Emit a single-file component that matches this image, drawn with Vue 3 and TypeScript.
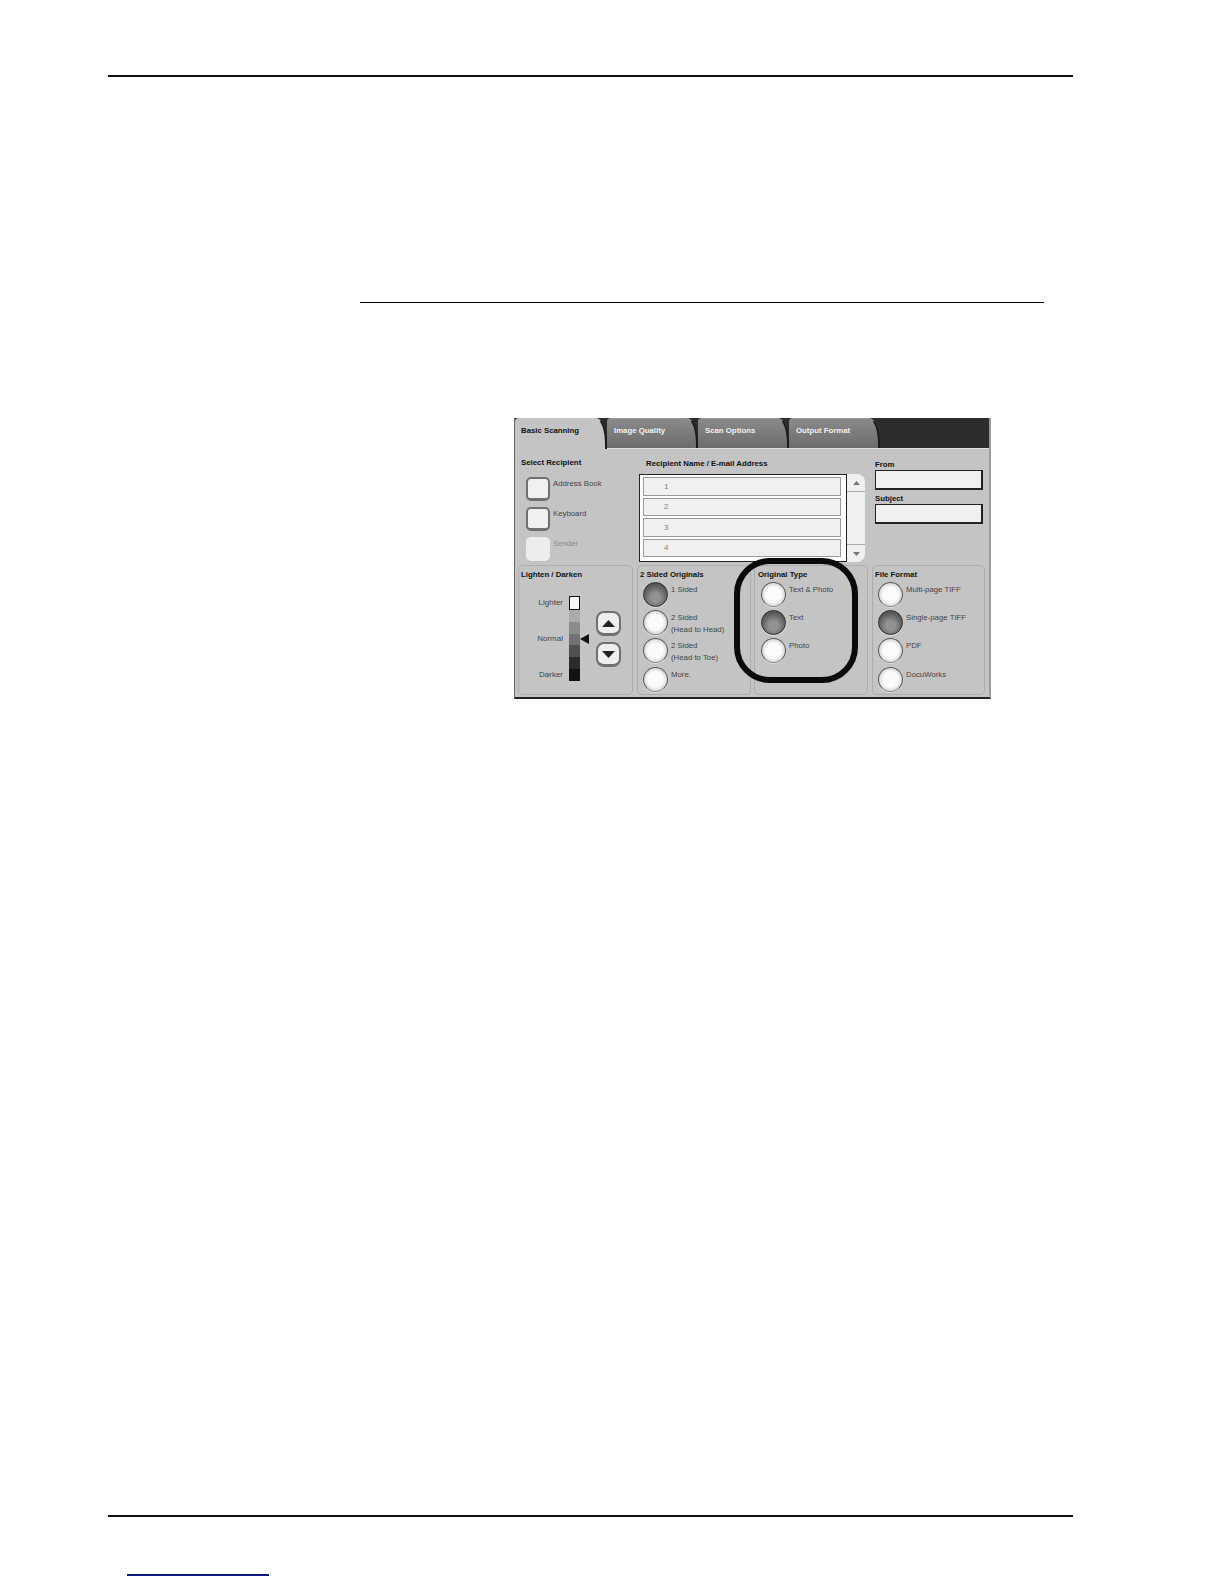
<script setup lang="ts">
const tabs = ['Image Quality', 'Scan Options', 'Output Format']
const rows = ['1', '2', '3', '4']
const scale = ['#f8f8f8', '#ababab', '#8c8c8c', '#727272', '#505050', '#2c2c2c', '#121212']
const sided = [
  { label: '1 Sided', on: true },
  { label: '2 Sided\n(Head to Head)', on: false },
  { label: '2 Sided\n(Head to Toe)', on: false },
  { label: 'More.', on: false },
]
const types = [
  { label: 'Text & Photo', on: false },
  { label: 'Text', on: true },
  { label: 'Photo', on: false },
]
const formats = [
  { label: 'Multi-page TIFF', on: false },
  { label: 'Single-page TIFF', on: true },
  { label: 'PDF', on: false },
  { label: 'DocuWorks', on: false },
]
</script>

<template>
  <main class="page">
    <div class="rule top"></div>
    <div class="rule mid"></div>
    <section class="ui">
      <div class="tabbar">
        <div class="tab active">Basic Scanning</div>
        <div v-for="t in tabs" :key="t" class="tab">{{ t }}</div>
      </div>
      <div class="body">
        <div class="upper">
          <div class="recip">
            <h4>Select Recipient</h4>
            <div class="sq"><i class="btn"></i><span>Address Book</span></div>
            <div class="sq"><i class="btn"></i><span>Keyboard</span></div>
            <div class="sq off"><i class="btn"></i><span>Sender</span></div>
          </div>
          <div class="list">
            <h4>Recipient Name / E-mail Address</h4>
            <div class="listbox">
              <div class="rows">
                <div v-for="r in rows" :key="r" class="row">{{ r }}</div>
              </div>
              <div class="scroll">
                <div class="cap"><svg width="7" height="4" viewBox="0 0 7 4"><path d="M3.5 0 7 4H0Z" fill="#777" /></svg></div>
                <div class="cap"><svg width="7" height="4" viewBox="0 0 7 4"><path d="M3.5 4 0 0H7Z" fill="#777" /></svg></div>
              </div>
            </div>
          </div>
          <div class="fields">
            <h4>From</h4>
            <div class="field"></div>
            <h4>Subject</h4>
            <div class="field"></div>
          </div>
        </div>
        <div class="lower">
          <div class="group g1">
            <h4>Lighten / Darken</h4>
            <div class="lighten">
              <div class="labels"><span>Lighter</span><span>Normal</span><span>Darker</span></div>
              <div class="scale"><b v-for="c in scale" :key="c" :style="{ background: c }"></b></div>
              <svg class="mark" width="9" height="10" viewBox="0 0 9 10"><path d="M0 5 9 0V10Z" fill="#111" /></svg>
              <div class="arrows">
                <div class="arrow"><svg width="13" height="7" viewBox="0 0 13 7"><path d="M6.5 0 13 7H0Z" fill="#222" /></svg></div>
                <div class="arrow"><svg width="13" height="7" viewBox="0 0 13 7"><path d="M6.5 7 0 0H13Z" fill="#222" /></svg></div>
              </div>
            </div>
          </div>
          <div class="group g2">
            <h4>2 Sided Originals</h4>
            <div v-for="o in sided" :key="o.label" class="opt">
              <i class="radio" :class="{ on: o.on }"></i><span>{{ o.label }}</span>
            </div>
          </div>
          <div class="group g3">
            <h4>Original Type</h4>
            <div v-for="o in types" :key="o.label" class="opt">
              <i class="radio" :class="{ on: o.on }"></i><span>{{ o.label }}</span>
            </div>
          </div>
          <div class="group g4">
            <h4>File Format</h4>
            <div v-for="o in formats" :key="o.label" class="opt">
              <i class="radio" :class="{ on: o.on }"></i><span>{{ o.label }}</span>
            </div>
          </div>
        </div>
      </div>
      <div class="ring"></div>
    </section>
    <div class="rule bottom"></div>
    <div class="link"></div>
  </main>
</template>

<style>
html, body { margin: 0; background: #fff; }
</style>

<style scoped>
.page { position: relative; width: 1224px; height: 1584px; background: #fff; font-family: "Liberation Sans", Arial, sans-serif; overflow: hidden; padding-top: 75px; box-sizing: border-box; }
.rule { height: 2px; background: #111; }
.top { margin: 0 151px 0 108px; }
.mid { height: 1px; margin: 225px 180px 0 360px; background: #000; }
.ui { position: relative; width: 476px; height: 281px; margin: 115px 0 0 515px; background: #c4c4c4; box-sizing: border-box; border-right: 2px solid #9a9a9a; border-bottom: 2px solid #222; box-shadow: -1px 0 0 #666; }
.bottom { margin: 816px 151px 0 108px; }
.link { height: 2px; background: #0a1a80; width: 142px; margin: 57px 0 0 127px; }
.tabbar { display: flex; align-items: flex-start; height: 31px; box-sizing: border-box; background: #2c2c2c; border-bottom: 1px solid #ddd; }
.tab { flex: none; width: 91px; height: 30px; box-sizing: border-box; padding: 6px 0 0 7px; background: linear-gradient(#8a8a8a, #6c6c6c); color: #f2f2f2; font-size: 7.8px; line-height: 11px; font-weight: 700; border-top-left-radius: 4px; border-top-right-radius: 11px 26px; border-top: 1px solid #999; border-right: 2px solid #1c1c1c; }
.tab.active { width: 92px; padding-left: 6px; background: #c4c4c4; color: #111; height: 31px; border-top-color: #c4c4c4; }
.body { padding: 0 0 0 3px; }
h4 { margin: 0; font-size: 7.8px; line-height: 11px; font-weight: 700; color: #111; }
.upper { display: flex; height: 116px; }
.recip { flex: none; width: 121px; padding: 8px 0 0 3px; box-sizing: border-box; }
.recip h4 { margin-bottom: 9px; }
.sq { display: flex; height: 30px; padding-left: 5px; }
.btn { flex: none; width: 24px; height: 24px; border-radius: 5px; background: #f0f0f0; border: 2px solid #707070; border-bottom-width: 3px; box-sizing: border-box; }
.sq span { font-size: 7.8px; line-height: 12px; color: #444; margin-left: 3px; padding-top: 1px; }
.off .btn { border: 0; background: #ededed; }
.off span { color: #8a8a8a; }
.list { flex: none; width: 226px; padding-top: 9px; box-sizing: border-box; }
.list h4 { margin-left: 7px; }
.listbox { display: flex; height: 88px; margin-top: 5px; }
.rows { width: 208px; background: #fff; border: 1px solid #222; padding: 2px 5px 4px 3px; box-sizing: border-box; display: flex; flex-direction: column; gap: 2px; }
.row { flex: 1; display: flex; align-items: center; border: 1px solid #999; background: #f0f0f0; font-size: 8px; color: #808080; padding-left: 20px; box-sizing: border-box; }
.scroll { width: 18px; background: #f0f0f0; border-radius: 0 8px 8px 0; display: flex; flex-direction: column; justify-content: space-between; }
.cap { height: 18px; display: flex; align-items: center; justify-content: center; border-bottom: 1px solid #aaa; box-sizing: border-box; }
.cap:last-child { border-bottom: 0; border-top: 1px solid #aaa; }
.fields { padding: 10px 0 0 10px; }
.field { width: 108px; height: 20px; background: #f0f0f0; border: 1px solid #222; border-right-width: 2px; border-bottom-width: 2px; box-sizing: border-box; margin-bottom: 3px; }
.lower { display: flex; }
.group { flex: none; position: relative; height: 130px; border: 1px solid #adadad; border-radius: 5px; box-sizing: border-box; padding: 3px 2px 0; }
.g1 { width: 115px; margin-right: 4px; }
.g2 { width: 114px; margin-right: 3px; }
.g3 { width: 114px; margin-right: 4px; }
.g4 { width: 113px; }
.g3 h4 { margin-left: 1px; }
.opt { display: flex; height: 28.4px; padding: 1.5px 0 0 3px; box-sizing: border-box; }
.g3 .opt { padding-left: 4px; }
.opt span { white-space: pre-line; font-size: 7.8px; line-height: 12px; color: #444; margin: 2px 0 0 3px; }
.radio { flex: none; width: 25px; height: 25px; border-radius: 50%; box-sizing: border-box; background: radial-gradient(circle at 50% 50%, #fbfbfb 45%, #e2e2e2 64%, #9a9a9a 88%); border: 1.5px solid #5c5c5c; border-bottom-color: #8a8a8a; box-shadow: 0 1px 0 #dedede; }
.radio.on { background: radial-gradient(circle at 50% 64%, #929292 24%, #636363 60%, #3c3c3c 100%); border-color: #2e2e2e; }
.lighten { display: flex; height: 110px; padding-top: 16px; box-sizing: border-box; }
.labels { flex: none; width: 43px; height: 85px; padding: 1px 1px 0 0; display: flex; flex-direction: column; justify-content: space-between; text-align: right; font-size: 8px; line-height: 12px; color: #444; box-sizing: border-box; }
.scale { flex: none; margin-left: 5px; width: 11px; height: 85px; display: flex; flex-direction: column; }
.scale b { flex: 1; }
.scale b:first-child { border: 1px solid #111; }
.mark { flex: none; margin: 38px 0 0; }
.arrows { margin: 15px 0 0 7px; display: flex; flex-direction: column; gap: 6px; }
.arrow { width: 25px; height: 25px; border-radius: 8px; background: #eee; border: 2px solid #707070; border-bottom-width: 3px; box-sizing: border-box; display: flex; align-items: center; justify-content: center; }
.ring { position: absolute; left: 219px; top: 140px; width: 124px; height: 125px; border: 6px solid #0a0a0a; border-radius: 36px; box-sizing: border-box; }
</style>
